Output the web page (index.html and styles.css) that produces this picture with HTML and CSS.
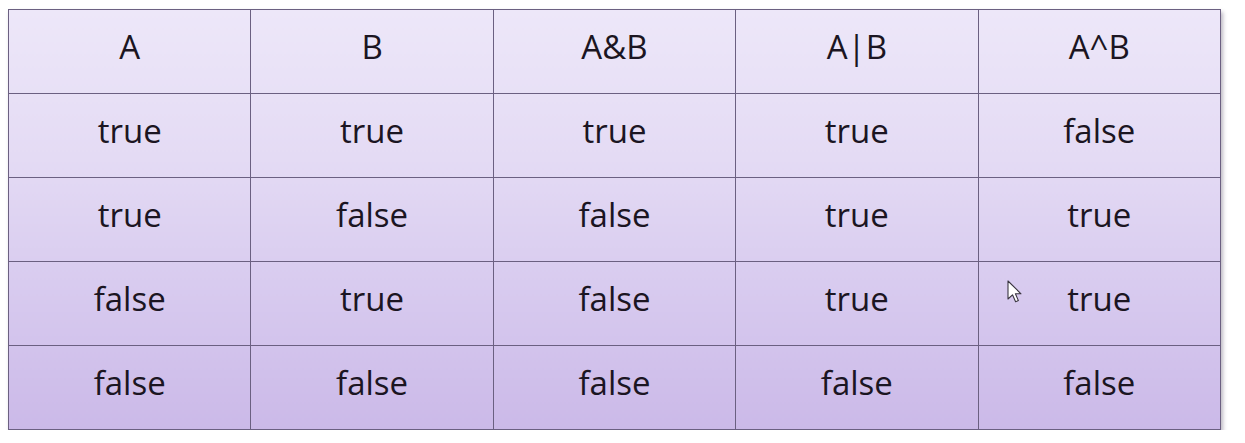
FILE: index.html
```html
<!DOCTYPE html>
<html>
<head>
<meta charset="utf-8">
<link rel="stylesheet" href="styles.css">
</head>
<body>
<div class="stage">
<table class="truth">
  <tr><td>A</td><td>B</td><td>A&amp;B</td><td>A|B</td><td>A^B</td></tr>
  <tr><td>true</td><td>true</td><td>true</td><td>true</td><td>false</td></tr>
  <tr><td>true</td><td>false</td><td>false</td><td>true</td><td>true</td></tr>
  <tr><td>false</td><td>true</td><td>false</td><td>true</td><td class="cursor-cell">true<svg class="cursor" width="16" height="24" viewBox="0 0 16 24"><path d="M1 1 L1 19 L5.5 14.8 L8.6 21.8 L11.4 20.6 L8.4 13.8 L14 13.8 Z" fill="#fff" stroke="#3a3540" stroke-width="1.1" stroke-linejoin="round"/></svg></td></tr>
  <tr><td>false</td><td>false</td><td>false</td><td>false</td><td>false</td></tr>
</table>
</div>
</body>
</html>
```
FILE: styles.css
```css
html, body {
  margin: 0;
  padding: 0;
  background: #ffffff;
}
.stage {
  padding: 9px 0 0 8px;
}
.truth {
  width: 1213px;
  border-collapse: collapse;
  background: linear-gradient(180deg, #ede7f9 0%, #e4dbf4 35%, #d8cbef 65%, #cbb9e8 100%);
  box-shadow: 2px 3px 4px rgba(60, 50, 80, 0.35);
  font-family: "Open Sans", "Noto Sans", sans-serif;
  font-size: 33px;
  color: #1b1522;
}
.truth td {
  border: 1px solid #6b6081;
  height: 72px;
  width: 20%;
  padding: 0 0 11px 0;
  text-align: center;
  vertical-align: middle;
  line-height: 1;
}
.cursor-cell {
  position: relative;
}
.cursor {
  position: absolute;
  left: 28px;
  top: 18px;
}
```
